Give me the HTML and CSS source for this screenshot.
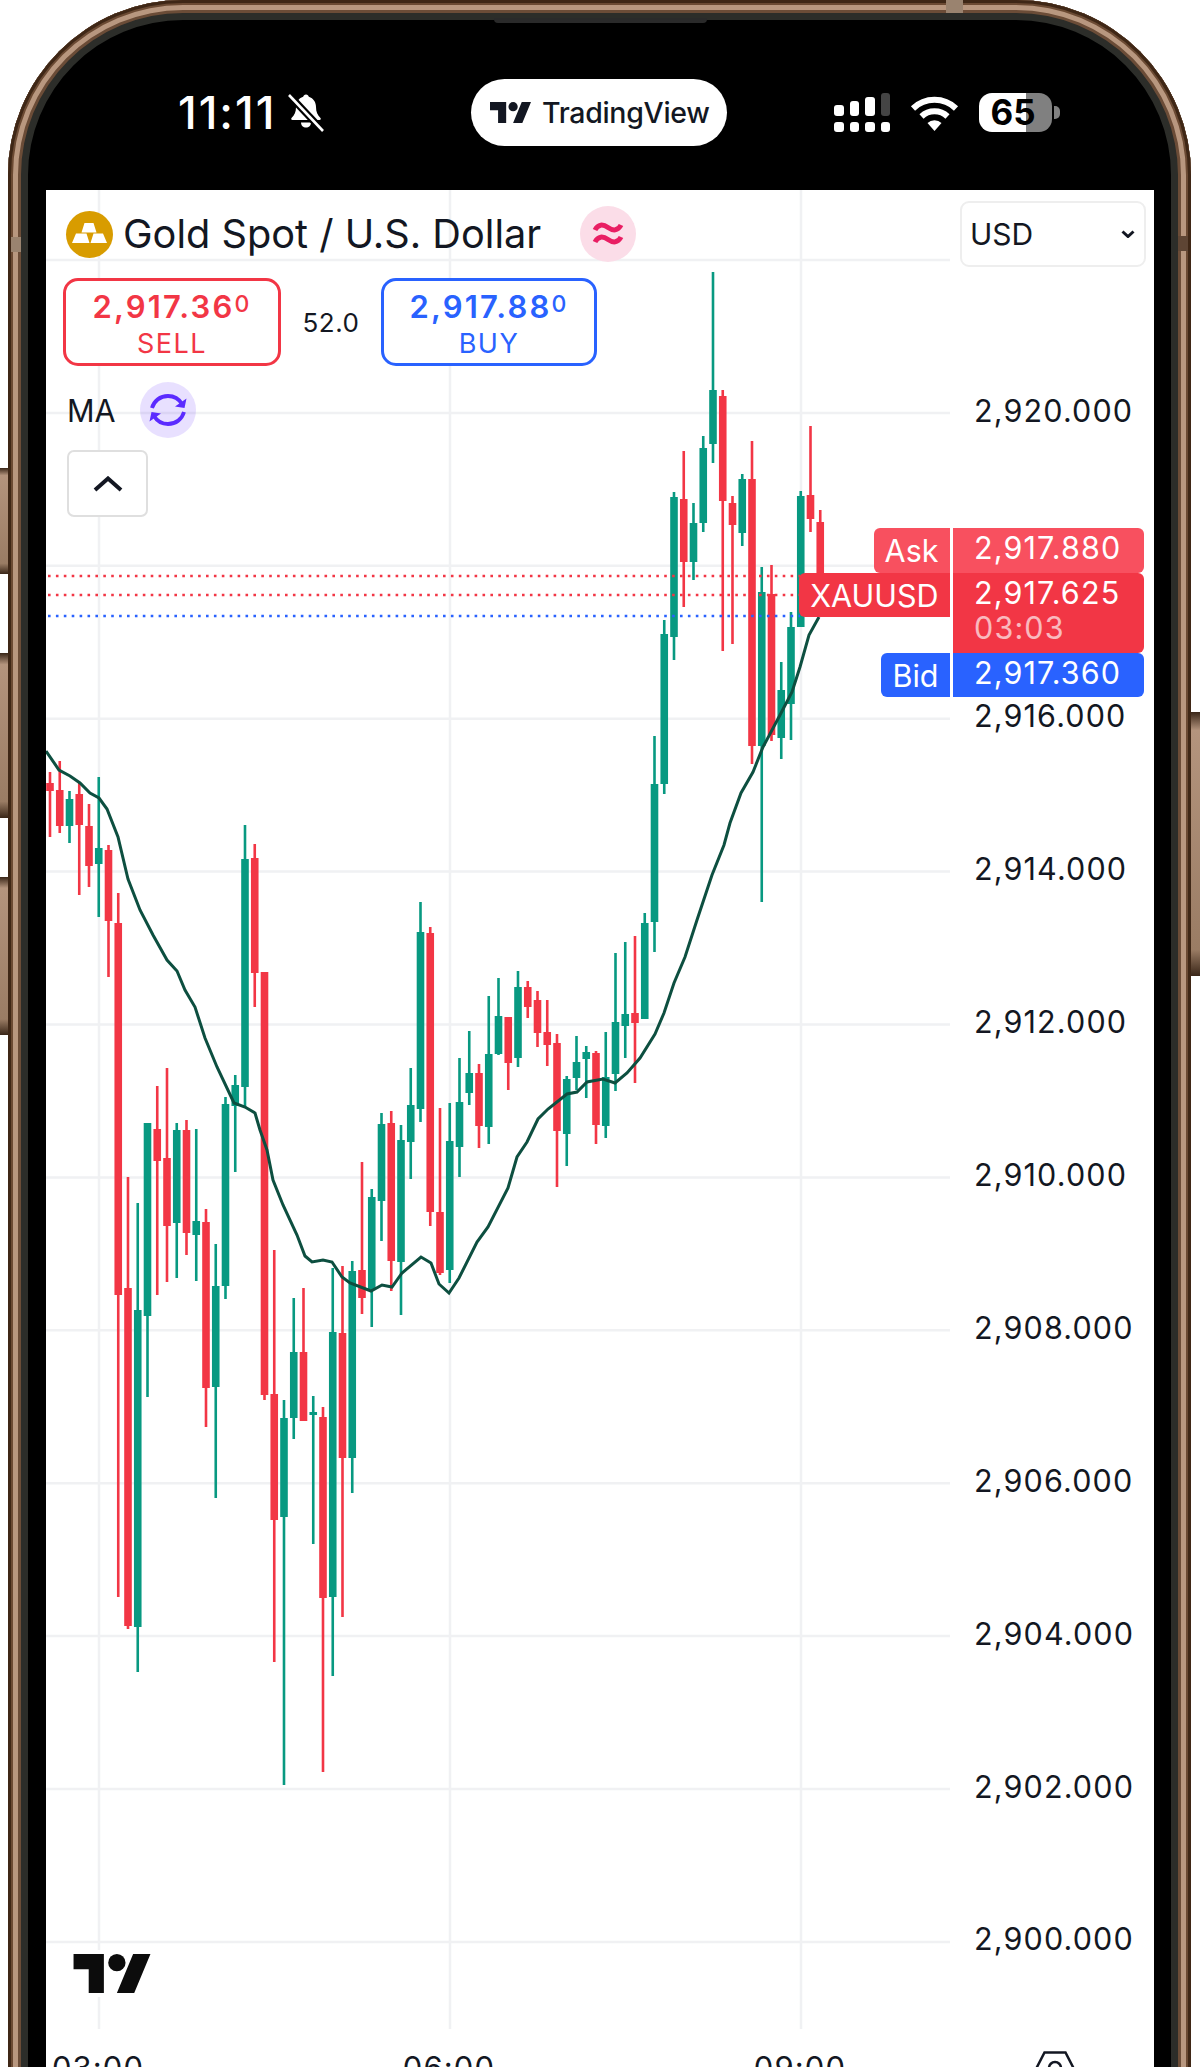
FILE: index.html
```html
<!DOCTYPE html>
<html lang="en">
<head>
    <meta charset="UTF-8">
    <meta name="viewport" content="width=device-width, initial-scale=1.0">
    <title>Gold Spot / U.S. Dollar</title>
    <link rel="stylesheet" href="styles.css">
</head>
<body>
<div class="page">
    <!-- Side buttons of the phone -->
    <span class="side-btn btn-silent"></span>
    <span class="side-btn btn-vol-up"></span>
    <span class="side-btn btn-vol-down"></span>
    <span class="side-btn btn-power"></span>

    <div class="phone">
        <span class="notch"></span>
        <span class="antenna antenna-top"></span>
        <span class="antenna antenna-left"></span>
        <span class="antenna antenna-right"></span>

        <!-- Status bar -->
        <div class="status">
            <div class="status-left">
                <span class="clock">11:11</span>
                <svg class="bell" viewBox="0 0 38 39">
                    <path fill="#fff" d="M19 1.500c-1.500 0-2.600 1-2.800 2.300C11.500 5.200 9 9.500 9 14c0 5-1.500 8-4.500 11-.7.8-.2 2 .9 2h27.200c1.100 0 1.600-1.200.9-2C30.500 22 29 19 29 14c0-4.500-2.500-8.800-7.200-10.200C21.600 2.500 20.500 1.500 19 1.500z"/>
                    <path fill="#fff" d="M14 29.500h10c0 3-2.200 5-5 5s-5-2-5-5z"/>
                    <path stroke="#000" stroke-width="7" d="M3 3l32 34"/>
                    <path stroke="#fff" stroke-width="2.600" d="M2 2l34 36"/>
                </svg>
            </div>
            <div class="pill">
                <svg class="pill-logo" viewBox="0 4 35.500 18">
                    <path d="M14 22H7V11H0V4h14v18zM28 22h-8l7.500-18h8L28 22z"/>
                    <circle cx="20" cy="8" r="4"/>
                </svg>
                <span>TradingView</span>
            </div>
            <div class="status-right">
                <div class="signal">
                    <div class="signal-col"><span class="sig-top sig-1"></span><span class="sig-dot"></span></div>
                    <div class="signal-col"><span class="sig-top sig-2"></span><span class="sig-dot"></span></div>
                    <div class="signal-col"><span class="sig-top sig-3"></span><span class="sig-dot"></span></div>
                    <div class="signal-col"><span class="sig-top sig-4"></span><span class="sig-dot"></span></div>
                </div>
                <svg class="wifi" viewBox="0 0 49 36">
                    <path fill="none" stroke="#fff" stroke-width="6" d="M3 13.500a31 31 0 0 1 43 0"/>
                    <path fill="none" stroke="#fff" stroke-width="6" d="M11.500 21.500a19 19 0 0 1 26 0"/>
                    <path fill="#fff" d="M17.500 28a10 10 0 0 1 14 0l-7 8z"/>
                </svg>
                <div class="battery"><span class="battery-num">65</span></div>
                <span class="battery-cap"></span>
            </div>
        </div>

        <div class="screen">
            <!-- Chart canvas, in page coordinates. Candles and MA come from chart.js -->
            <svg class="chart" id="chart" viewBox="46 190 1108 1877"></svg>

            <div class="title-row">
                <span class="symbol-icon">
                    <svg viewBox="0 0 47 47">
                        <path fill="#fff" d="M18.500 12h9l3 9.500h-15zM10 22.500h10.500l3 9.500H6zM27.500 22.500H37l4 9.500H24.500z"/>
                    </svg>
                </span>
                <h1 class="title">Gold Spot / U.S. Dollar</h1>
                <span class="market-dot">
                    <svg viewBox="0 0 56 56">
                        <path d="M15 24c3-6 8-6 13-2.500s10 3.500 13-2.500M15 36c3-6 8-6 13-2.500s10 3.500 13-2.500"/>
                    </svg>
                </span>
                <div class="currency">
                    <span>USD</span>
                    <svg class="currency-arrow" viewBox="0 0 14 8"><path d="M1.500 1.500L7 6.500l5.500-5"/></svg>
                </div>
            </div>

            <div class="quote-row">
                <div class="quote quote-sell">
                    <div class="quote-price">2,917.36<span class="quote-sup">0</span></div>
                    <div class="quote-side">SELL</div>
                </div>
                <div class="spread">52.0</div>
                <div class="quote quote-buy">
                    <div class="quote-price">2,917.88<span class="quote-sup">0</span></div>
                    <div class="quote-side">BUY</div>
                </div>
            </div>

            <div class="ma-row">
                <span class="ma-label">MA</span>
                <span class="ma-sync">
                    <svg viewBox="0 0 56 56">
                        <path d="M12 26c2-7 8-12 16-12 6 0 11 3 14 8M44 30c-2 7-8 12-16 12-6 0-11-3-14-8"/>
                        <path class="sync-head" d="M35 24.500l9.500 1.500 2-9.500zM21 31.500L11.500 30l-2 9.500z"/>
                    </svg>
                </span>
            </div>

            <button class="collapse-btn">
                <svg viewBox="0 0 30 16"><path d="M2 14L15 2.500 28 14"/></svg>
            </button>

            <!-- Price axis -->
            <div class="price-axis">
                <div>2,920.000</div>
                <div></div>
                <div>2,916.000</div>
                <div>2,914.000</div>
                <div>2,912.000</div>
                <div>2,910.000</div>
                <div>2,908.000</div>
                <div>2,906.000</div>
                <div>2,904.000</div>
                <div>2,902.000</div>
                <div>2,900.000</div>
            </div>

            <!-- Price tags over the axis -->
            <div class="tags">
                <div class="tag-row">
                    <div class="tag-name tag-ask">Ask</div>
                    <div class="tag-val tag-ask tag-val-ask">2,917.880</div>
                </div>
                <div class="tag-row">
                    <div class="tag-name tag-last">XAUUSD</div>
                    <div class="tag-val tag-last tag-val-last">
                        2,917.625
                        <div class="tag-timer">03:03</div>
                    </div>
                </div>
                <div class="tag-row">
                    <div class="tag-name tag-bid">Bid</div>
                    <div class="tag-val tag-bid tag-val-bid">2,917.360</div>
                </div>
            </div>

            <svg class="tv-logo" viewBox="0 4 35.500 18">
                <path d="M14 22H7V11H0V4h14v18zM28 22h-8l7.500-18h8L28 22z"/>
                <circle cx="20" cy="8" r="4"/>
            </svg>

            <!-- Time axis, cut by the bottom of the picture -->
            <div class="time-axis">
                <span class="time-label">03:00</span>
                <span class="time-label">06:00</span>
                <span class="time-label">09:00</span>
                <svg class="hex-icon" viewBox="0 0 40 40">
                    <path d="M9.500 1.500h21L39 18l-8.500 18h-21L1 18z"/>
                    <circle cx="20" cy="17" r="6"/>
                </svg>
            </div>
        </div>
    </div>
</div>
<script src="chart.js"></script>
</body>
</html>
```

FILE: styles.css
```css
* {
    box-sizing: border-box;
}
body {
    margin: 0;
    background-color: #fff;
    font-family: Inter, "Liberation Sans", sans-serif;
    color: #131722;
}
.page {
    position: relative;
    width: 1200px;
    height: 2067px;
    overflow: hidden;
    background-color: #fff;
}

/* Phone body */
.phone {
    position: relative;
    width: 1183px;
    height: 2400px;
    margin-left: 8px;
    padding: 0 37px 0 38px;
    background-color: #000;
    border-radius: 175px;
    box-shadow:
        inset 0 0 0 3px #3f2716,
        inset 0 0 0 5px #6b4a33,
        inset 0 0 0 10px #b8977f,
        inset 0 0 0 13px #6b4c37,
        inset 0 0 0 20px #2c2d29;
}
.side-btn {
    position: absolute;
    width: 9px;
    background: linear-gradient(180deg, #3a2618 0%, #b4947d 7%, #9a7c64 90%, #3a2618 100%);
}
.btn-silent { left: 0; top: 468px; height: 106px; }
.btn-vol-up { left: 0; top: 653px; height: 165px; }
.btn-vol-down { left: 0; top: 877px; height: 158px; }
.btn-power { right: 0; top: 712px; height: 264px; }
.notch {
    position: absolute;
    left: 486px;
    top: 18px;
    width: 213px;
    height: 5px;
    background-color: #2a2a2a;
    border-radius: 0 0 4px 4px;
}
.antenna {
    position: absolute;
    background-color: #9a836f;
}
.antenna-top { left: 938px; top: 0; width: 17px; height: 13px; }
.antenna-left { left: 3px; top: 237px; width: 10px; height: 15px; }
.antenna-right { right: 3px; top: 236px; width: 10px; height: 15px; background-color: #5e4534; }

/* Status bar */
.status {
    display: grid;
    grid-template-columns: 293px 256px 1fr;
    align-items: center;
    height: 190px;
    padding: 35px 94px 0 132px;
}
.status-left {
    display: flex;
    align-items: center;
    gap: 11px;
    color: #fff;
}
.clock {
    font-size: 45px;
    font-weight: 500;
    line-height: 1;
    letter-spacing: 2px;
}
.bell {
    width: 38px;
    height: 39px;
    fill: none;
}
.pill {
    display: flex;
    align-items: center;
    gap: 11px;
    height: 67px;
    padding-left: 19px;
    background-color: #fff;
    border-radius: 34px;
    font-size: 28.500px;
    font-weight: 500;
    letter-spacing: -0.300px;
}
.pill-logo {
    width: 41px;
    height: 21px;
    fill: #131722;
}
.status-right {
    display: flex;
    align-items: center;
    justify-content: flex-end;
}
.signal {
    display: flex;
    align-items: flex-end;
    gap: 6px;
    margin-right: 20px;
}
.signal-col {
    display: flex;
    flex-direction: column;
    gap: 6px;
    width: 9.500px;
}
.signal-col span {
    display: block;
    background-color: #fff;
    border-radius: 3px;
}
.sig-dot { height: 10px; }
.sig-1 { height: 11px; }
.sig-2 { height: 15px; }
.sig-3 { height: 19px; }
.signal-col .sig-4 { height: 23px; background-color: #444; }
.wifi {
    width: 49px;
    height: 36px;
    margin-right: 20px;
}
.battery {
    position: relative;
    width: 73px;
    height: 39px;
    border-radius: 13px;
    background: linear-gradient(90deg, #fff 65%, #808080 65%);
    color: #000;
    font-size: 35px;
    font-weight: 700;
    line-height: 39px;
    text-align: center;
}
.battery-num {
    display: block;
    padding-right: 5px;
}
.battery-cap {
    width: 6px;
    height: 13px;
    margin-left: 2px;
    background-color: #808080;
    border-radius: 0 5px 5px 0;
}

/* Screen */
.screen {
    position: relative;
    height: 2210px;
    background-color: #fff;
}
.chart {
    position: absolute;
    left: 0;
    top: 0;
    width: 1108px;
    height: 1877px;
}
.title-row, .quote-row, .ma-row, .collapse-btn {
    position: relative;
}
.title-row {
    display: flex;
    align-items: center;
    height: 66px;
    margin: 0 8px 0 20px;
    top: 11px;
}
.symbol-icon {
    display: block;
    width: 47px;
    height: 47px;
    margin-right: 10px;
    background-color: #d89c00;
    border-radius: 50%;
}
.symbol-icon svg {
    display: block;
}
.title {
    margin: 0;
    padding-top: 2px;
    font-size: 39.700px;
    font-weight: 400;
    line-height: 1;
}
.market-dot {
    display: block;
    width: 56px;
    height: 56px;
    margin-left: 39px;
    background-color: #fbdde8;
    border-radius: 50%;
}
.market-dot svg {
    display: block;
    fill: none;
    stroke: #e91e63;
    stroke-width: 5px;
}
.currency {
    display: flex;
    align-items: center;
    justify-content: space-between;
    width: 186px;
    height: 66px;
    margin-left: auto;
    padding: 0 9px 0 8px;
    background-color: #fff;
    border: 2.500px solid #eeeeee;
    border-radius: 9px;
    font-size: 30px;
}
.currency-arrow {
    width: 14px;
    height: 8px;
    fill: none;
    stroke: #131722;
    stroke-width: 3px;
}
.quote-row {
    display: flex;
    align-items: center;
    margin: 22px 0 0 17px;
}
.quote {
    width: 218px;
    height: 88px;
    padding-top: 8px;
    border: 3px solid;
    border-radius: 15px;
    background-color: #fff;
    text-align: center;
}
.quote-sell { color: #f23645; }
.quote-buy { width: 216px; color: #2962ff; }
.quote-price {
    font-size: 31px;
    font-weight: 600;
    line-height: 35px;
    letter-spacing: 2.200px;
}
.quote-sup {
    position: relative;
    top: -6px;
    font-size: 23px;
    font-weight: 500;
}
.quote-side {
    font-size: 27px;
    line-height: 32px;
    letter-spacing: 1.500px;
}
.spread {
    width: 100px;
    font-size: 26px;
    letter-spacing: 0.500px;
    text-align: center;
}
.ma-row {
    display: flex;
    align-items: center;
    gap: 24px;
    margin: 16px 0 0 21px;
}
.ma-label {
    padding-top: 2px;
    font-size: 30.500px;
    line-height: 54px;
}
.ma-sync {
    display: block;
    width: 56px;
    height: 56px;
    background-color: rgba(98, 50, 255, 0.15);
    border-radius: 50%;
}
.ma-sync svg {
    display: block;
    fill: none;
    stroke: #5b2bff;
    stroke-width: 3.800px;
}
.ma-sync .sync-head {
    fill: #5b2bff;
    stroke: none;
}
.collapse-btn {
    display: block;
    width: 81px;
    height: 67px;
    margin: 12px 0 0 21px;
    padding: 0;
    background-color: #fff;
    border: 2.500px solid #dfdfdf;
    border-radius: 7px;
}
.collapse-btn svg {
    display: block;
    width: 30px;
    height: 16px;
    margin: 0 auto;
    fill: none;
    stroke: #131722;
    stroke-width: 4px;
}

/* Axes */
.price-axis {
    position: absolute;
    left: 928px;
    top: 143.500px;
    font-size: 30.500px;
    line-height: 153px;
    letter-spacing: 1.150px;
}
.price-axis div {
    height: 152.900px;
}
.tags {
    position: absolute;
    left: 751px;
    top: 338px;
    width: 347px;
    color: #fff;
    font-size: 30.500px;
}
.tag-row {
    display: flex;
    align-items: flex-start;
    justify-content: flex-end;
    gap: 3.500px;
}
.tag-name {
    height: 44px;
    padding: 0 11px;
    line-height: 45px;
    border-radius: 6px 0 0 6px;
}
.tag-val {
    width: 191px;
    padding-left: 21px;
    line-height: 40px;
    letter-spacing: 1.150px;
    border-radius: 0 6px 6px 0;
}
.tag-ask { background-color: #f8505f; height: 45px; }
.tag-last { background-color: #f23645; }
.tag-bid { background-color: #2962ff; }
.tag-val-ask { height: 45px; }
.tag-val-last { height: 80px; }
.tag-val-bid { height: 44px; }
.tag-timer {
    margin-top: -3px;
    opacity: 0.65;
    line-height: 36px;
}
.tv-logo {
    position: absolute;
    left: 27px;
    top: 1764px;
    width: 78px;
    height: 39px;
    fill: #0c0c0c;
    background-color: #fff;
    outline: 4px solid #fff;
}
.time-axis {
    position: absolute;
    left: 5px;
    top: 1861px;
    display: flex;
    align-items: flex-start;
    gap: 257px;
    font-size: 31px;
    line-height: 36px;
    letter-spacing: 1.100px;
}
.time-label {
    width: 94px;
    margin-top: -1px;
    text-align: center;
}
.hex-icon {
    width: 40px;
    height: 40px;
    margin: 0 0 0 -69px;
    fill: none;
    stroke: #131722;
    stroke-width: 2.500px;
}
```

FILE: chart.js
```js
const svg = document.getElementById("chart");
const NS = "http://www.w3.org/2000/svg";

// color, wick top, body top, body bottom, wick bottom (page pixels)
const candles = [
    ["r",772,783,791,837],["r",761,790,826,833],["g",791,799,826,843],["r",783,794,825,895],
    ["r",804,826,866,887],["g",777,848,864,917],["r",845,850,921,977],["r",893,923,1295,1597],
    ["r",1177,1288,1626,1629],["g",1203,1310,1627,1672],["g",1123,1123,1316,1397],["r",1086,1129,1161,1295],
    ["r",1068,1158,1226,1282],["g",1123,1130,1223,1278],["r",1120,1130,1233,1255],["g",1129,1221,1235,1281],
    ["r",1209,1222,1388,1427],["g",1244,1286,1387,1498],["g",1097,1104,1286,1299],["g",1075,1085,1106,1172],
    ["g",825,859,1087,1107],["r",844,858,973,1007],["r",972,972,1395,1400],["r",1250,1394,1520,1662],
    ["g",1400,1418,1517,1785],["g",1298,1352,1418,1439],["r",1288,1352,1421,1421],["g",1396,1412,1415,1544],
    ["r",1407,1417,1598,1772],["g",1268,1332,1597,1676],["r",1266,1333,1458,1617],["g",1261,1271,1458,1493],
    ["r",1162,1270,1298,1314],["g",1189,1197,1289,1327],["g",1113,1124,1201,1241],["r",1111,1123,1261,1291],
    ["g",1125,1140,1262,1315],["g",1068,1105,1142,1179],["g",902,932,1109,1122],["r",927,933,1212,1226],
    ["r",1108,1212,1273,1275],["g",1103,1141,1270,1283],["g",1058,1102,1147,1177],["g",1031,1073,1093,1105],
    ["r",1064,1073,1126,1148],["g",996,1054,1127,1144],["g",978,1016,1054,1055],["r",1017,1017,1063,1090],
    ["g",971,987,1058,1067],["r",981,987,1007,1018],["r",991,1000,1033,1047],["r",1000,1032,1045,1066],
    ["r",1034,1043,1131,1187],["g",1076,1079,1134,1166],["g",1036,1062,1078,1090],["g",1046,1052,1059,1098],
    ["r",1051,1053,1125,1144],["g",1032,1077,1126,1138],["g",953,1022,1074,1091],["g",942,1014,1026,1058],
    ["r",936,1013,1023,1083],["g",913,923,1019,1019],["g",736,784,922,952],["g",620,634,784,794],
    ["g",492,497,637,660],["r",451,499,562,607],["g",503,523,562,580],["g",436,448,523,532],
    ["g",272,390,444,463],["r",390,396,501,651],["r",496,503,525,644],["g",474,479,533,546],
    ["r",441,479,746,764],["g",567,592,746,902],["r",565,594,735,741],["g",662,690,738,759],
    ["g",612,627,704,740],["g",491,496,627,627],["r",426,495,519,532],["r",510,522,600,600]
];

const maLine = [
    [46,751],[59,770],[70,776],[80,783],[90,793],[99,798],[107,809],[118,837],[128,879],[140,910],
    [153,935],[167,960],[177,971],[185,990],[195,1007],[205,1038],[217,1067],[234,1103],[245,1107],[255,1113],
    [260,1130],[267,1150],[273,1180],[283,1205],[297,1235],[305,1256],[312,1262],[323,1260],[332,1262],[342,1277],
    [350,1283],[371,1291],[382,1285],[392,1287],[402,1273],[421,1257],[431,1263],[439,1284],[449,1293],[459,1278],
    [477,1242],[488,1227],[508,1188],[517,1157],[527,1142],[538,1119],[548,1109],[567,1094],[577,1092],[587,1082],
    [603,1079],[615,1083],[627,1073],[640,1058],[655,1034],[664,1013],[674,983],[685,957],[697,920],[712,875],
    [724,845],[730,823],[741,793],[753,772],[763,747],[780,715],[792,692],[800,667],[809,635],[819,617]
];

function addPath(d, stroke, width, dash) {
    const p = document.createElementNS(NS, "path");
    p.setAttribute("d", d);
    p.setAttribute("fill", "none");
    p.setAttribute("stroke", stroke);
    p.setAttribute("stroke-width", width);
    if (dash) p.setAttribute("stroke-dasharray", dash);
    svg.appendChild(p);
}

// Grid
let grid = "";
for (let n = 0; n < 12; n++) {
    const y = 260 + n * 152.9;
    grid += `M46 ${y}H950`;
}
[99, 450, 801].forEach(x => { grid += `M${x} 190V2029`; });
addPath(grid, "#f0f1f3", 2.5);

// Candles
const wicks = { r: "", g: "" };
const bodies = { r: "", g: "" };
candles.forEach((c, i) => {
    const x = 50 + i * 9.75;
    wicks[c[0]] += `M${x} ${c[1]}V${c[4]}`;
    bodies[c[0]] += `M${x} ${c[2]}V${c[3]}`;
});
addPath(wicks.r, "#f23645", 2.6);
addPath(bodies.r, "#f23645", 7.6);
addPath(wicks.g, "#089981", 2.6);
addPath(bodies.g, "#089981", 7.6);

// Moving average
addPath("M" + maLine.map(p => p.join(" ")).join("L"), "#0d4f40", 3);

// Ask, last and bid lines
addPath("M48 576H800", "#f23645", 2.6, "2.6 5.3");
addPath("M48 595H800", "#f23645", 2.6, "2.6 5.3");
addPath("M48 616H800", "#2962ff", 2.6, "2.6 5.3");
```
